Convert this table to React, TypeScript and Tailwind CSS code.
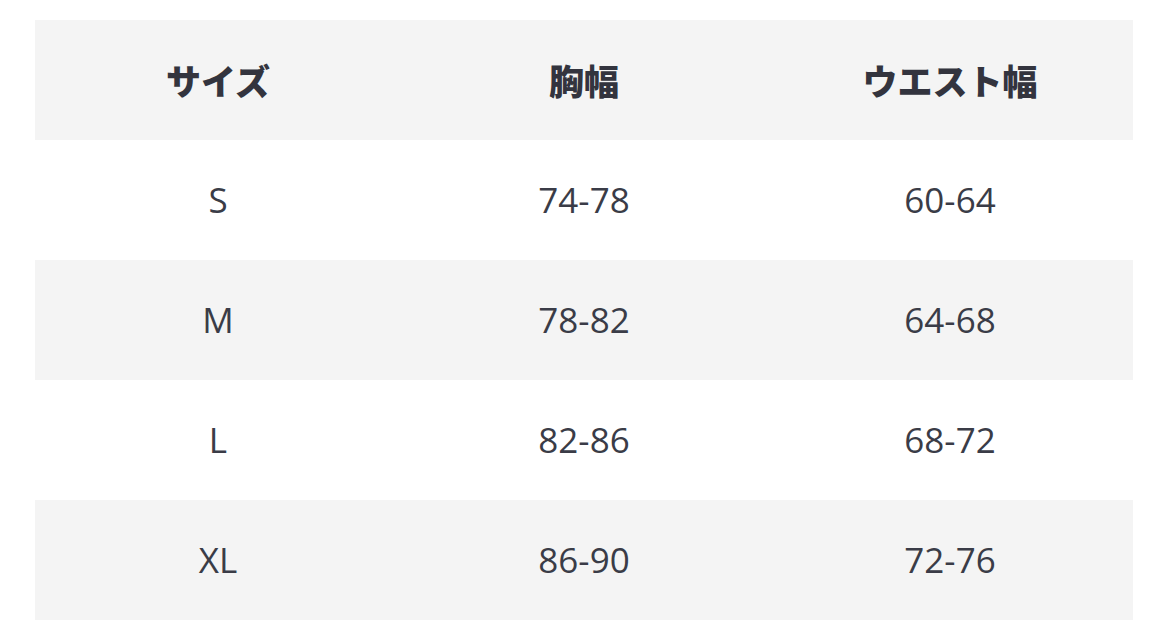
const rows = [
  { size: "S", chest: "74-78", waist: "60-64" },
  { size: "M", chest: "78-82", waist: "64-68" },
  { size: "L", chest: "82-86", waist: "68-72" },
  { size: "XL", chest: "86-90", waist: "72-76" },
];

export default function App() {
  return (
    <div className="min-h-screen bg-white pl-[35px] pr-[36px] pt-[20px] pb-[19px] text-[#3a3c47] font-['Open_Sans','Noto_Sans_CJK_JP',sans-serif]">
      <div className="grid grid-cols-3 h-[120px] items-center bg-[#f4f4f4] text-center text-[35px] font-black font-['Noto_Sans_CJK_JP',sans-serif] text-[#33343e]">
        <div>サイズ</div>
        <div>胸幅</div>
        <div>ウエスト幅</div>
      </div>
      {rows.map((r, i) => (
        <div
          key={r.size}
          className={`grid grid-cols-3 h-[120px] items-center text-center text-[35px] ${
            i % 2 === 1 ? "bg-[#f4f4f4]" : "bg-white"
          }`}
        >
          <div>{r.size}</div>
          <div>{r.chest}</div>
          <div>{r.waist}</div>
        </div>
      ))}
    </div>
  );
}
